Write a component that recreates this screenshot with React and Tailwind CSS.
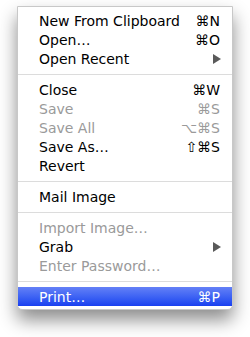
const ITEMS = [
  { label: 'New From Clipboard', key: '⌘N' },
  { label: 'Open…', key: '⌘O' },
  { label: 'Open Recent', arrow: true },
  { sep: true },
  { label: 'Close', key: '⌘W' },
  { label: 'Save', key: '⌘S', disabled: true },
  { label: 'Save All', key: '⌥⌘S', disabled: true },
  { label: 'Save As…', key: '⇧⌘S' },
  { label: 'Revert' },
  { sep: true },
  { label: 'Mail Image' },
  { sep: true },
  { label: 'Import Image…', disabled: true },
  { label: 'Grab', arrow: true },
  { label: 'Enter Password…', disabled: true },
  { sep: true },
  { label: 'Print…', key: '⌘P', active: true },
]

function Arrow({ className }) {
  return (
    <svg width="8" height="10" viewBox="0 0 8 10" className={className}>
      <path d="M0 0 L8 5 L0 10 Z" fill="currentColor" />
    </svg>
  )
}

function MenuRow({ item }) {
  if (item.sep) {
    return (
      <div className="h-[12px] flex items-center">
        <div className="h-px w-full bg-[#dcdcdc]" />
      </div>
    )
  }
  const color = item.active
    ? 'text-white bg-gradient-to-b from-[#6480f6] to-[#1a3ff0]'
    : item.disabled
      ? 'text-[#9a9a9a]'
      : 'text-black'
  return (
    <div className={`h-[19px] flex items-center pl-[21px] pr-[12px] ${color}`}>
      <span className="flex-1 whitespace-nowrap">{item.label}</span>
      {item.key && <span className="whitespace-nowrap">{item.key}</span>}
      {item.arrow && <Arrow className="text-[#5a5a5a] mr-[-1px]" />}
    </div>
  )
}

export default function App() {
  return (
    <div className="w-[250px] h-[337px] bg-white pt-[6px] pl-[17px]">
      <div className="w-[216px] bg-white border border-[#c8c8c8] rounded-b-[5px] pt-[4px] pb-[3px] shadow-[0_10px_18px_rgba(0,0,0,0.45)] text-[14px] leading-none font-['DejaVu_Sans','Liberation_Sans',sans-serif]">
        {ITEMS.map((item, i) => (
          <MenuRow key={i} item={item} />
        ))}
      </div>
    </div>
  )
}
